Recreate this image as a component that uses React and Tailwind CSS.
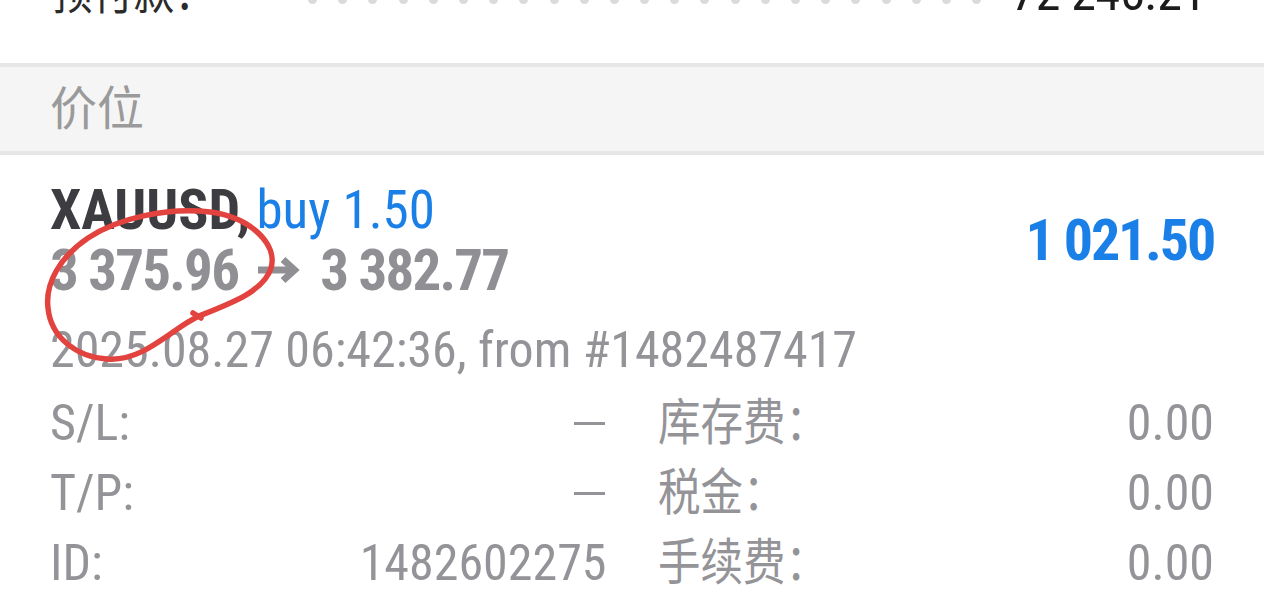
import React from "react";

const FONT =
  "font-[family-name:'Roboto_Condensed',Roboto,'Noto_Sans_CJK_SC',sans-serif]";

// the source screenshot is squeezed sideways, so CJK glyphs get narrowed too
function Cjk({ children, className = "" }) {
  return (
    <span className={`inline-block origin-left scale-x-[0.85] ${className}`}>{children}</span>
  );
}

function Dash() {
  return <span className="block w-[31px] h-[3px] bg-[#949498] mr-[2px]" aria-label="—" />;
}

function DetailRow({ label, value, label2, value2 }) {
  return (
    <div className="grid grid-cols-2 gap-x-[51px] h-[70px] items-center">
      <div className="flex justify-between items-center">
        <span>{label}</span>
        <span className="flex items-center h-[60px]">{value}</span>
      </div>
      <div className="flex justify-between items-center">
        <Cjk>{label2}</Cjk>
        <span>{value2}</span>
      </div>
    </div>
  );
}

export default function App() {
  const dots = Array.from({ length: 23 });

  return (
    <div className={`relative w-[1264px] h-[605px] overflow-hidden bg-white ${FONT}`}>
      {/* top row, cut off by the screen edge */}
      <div className="h-[63px] overflow-hidden">
        <div className="flex items-center h-[60px] -mt-[37px] pl-[52px] pr-[58px] text-[48px] text-[#2b2b2b]">
          <Cjk className="w-[250px]">预付款：</Cjk>
          <div className="flex-1 flex justify-between items-center pl-[6px] pr-[30px] mt-[12px]">
            {dots.map((_, i) => (
              <span key={i} className="w-[9px] h-[9px] rounded-full bg-[#dadada]" />
            ))}
          </div>
          <span className="text-[50px] text-[#1c1c1c] tracking-[-0.3px]">72 245.21</span>
        </div>
      </div>

      {/* section header */}
      <div className="border-y-4 border-[#e6e6e6] bg-[#f5f5f5] h-[92px] flex items-center px-[50px]">
        <span className="text-[47px] text-[#9a9a9a]">价位</span>
      </div>

      {/* position */}
      <div className="px-[50px] pt-[25px]">
        <div className="flex items-center justify-between">
          <div className="flex flex-col">
            <div className="h-[60px] flex items-center text-[56px] leading-none">
              <span className="font-bold text-[#3c3c41]">XAUUSD,</span>
              <span className="ml-[6px] text-[53px] text-[#1a7fe6]">buy 1.50</span>
            </div>
            <div className="h-[60px] flex items-center text-[57px] leading-none font-bold text-[#909094] tracking-[-1.8px]">
              <span>3 375.96</span>
              <svg className="mx-[18px]" width="46" height="30" viewBox="0 0 46 30" fill="none">
                <path d="M2 15 H38" stroke="#909094" strokeWidth="7" />
                <path d="M27 4.5 L38.5 15 L27 25.5" stroke="#909094" strokeWidth="7" strokeLinejoin="miter" />
              </svg>
              <span>3 382.77</span>
            </div>
          </div>
          <span className="text-[58px] leading-none font-bold text-[#1a7fe6] tracking-[-2.2px]">1 021.50</span>
        </div>

        <div className="mt-[20px] h-[60px] flex items-center text-[50px] text-[#949498]">
          2025.08.27 06:42:36, from #1482487417
        </div>

        <div className="mt-[6px] text-[50px] text-[#949498]">
          <DetailRow label="S/L:" value={<Dash />} label2="库存费：" value2="0.00" />
          <DetailRow label="T/P:" value={<Dash />} label2="税金：" value2="0.00" />
          <DetailRow label="ID:" value="1482602275" label2="手续费：" value2="0.00" />
        </div>
      </div>

      {/* hand-drawn marker annotation */}
      <svg
        className="absolute left-0 top-0 pointer-events-none"
        width="1264"
        height="605"
        viewBox="0 0 1264 605"
        fill="none"
      >
        <path
          d="M199 316 C232 303 264 291 271 268 C278 244 250 217 210 212 C168 207 118 218 88 238 C60 257 45 283 48 308 C51 338 77 357 107 359 C132 361 152 347 176 330 C186 323 193 319 199 316 M193 313 L201 318"
          stroke="#e2433f"
          strokeWidth="5.5"
          strokeLinecap="round"
          strokeLinejoin="round"
        />
      </svg>
    </div>
  );
}
